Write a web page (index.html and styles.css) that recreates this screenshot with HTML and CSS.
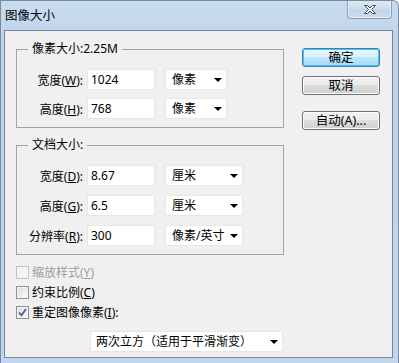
FILE: index.html
```html
<!DOCTYPE html>
<html>
<head>
  <title>图像大小</title>
  <link rel="stylesheet" href="styles.css">
</head>
<body>
  <div class="window">
    <div class="titlebar">
      <span class="title">图像大小</span>
      <div class="close-btn">
        <svg width="14" height="11" viewBox="0 0 14 11">
          <path d="M1.5 1.5h3l2.5 2.5 2.5-2.5h3l-4 4 4 4h-3l-2.5-2.5-2.5 2.5h-3l4-4z" fill="#fff" stroke="#3d4b5c" stroke-width="1" stroke-linejoin="round"/>
        </svg>
      </div>
    </div>

    <div class="frame">
      <div class="client">
        <div class="main">
          <fieldset class="group">
            <legend>像素大小:2.25M</legend>
            <div class="row">
              <label>宽度(<u>W</u>):</label>
              <div class="field">1024</div>
              <div class="select select-sm">像素<span class="arrow"></span></div>
            </div>
            <div class="row">
              <label>高度(<u>H</u>):</label>
              <div class="field">768</div>
              <div class="select select-sm">像素<span class="arrow"></span></div>
            </div>
          </fieldset>

          <fieldset class="group group-doc">
            <legend>文档大小:</legend>
            <div class="row">
              <label>宽度(<u>D</u>):</label>
              <div class="field">8.67</div>
              <div class="select select-md">厘米<span class="arrow"></span></div>
            </div>
            <div class="row">
              <label>高度(<u>G</u>):</label>
              <div class="field">6.5</div>
              <div class="select select-md">厘米<span class="arrow"></span></div>
            </div>
            <div class="row">
              <label>分辨率(<u>R</u>):</label>
              <div class="field">300</div>
              <div class="select select-md">像素/英寸<span class="arrow"></span></div>
            </div>
          </fieldset>

          <div class="checks">
            <div class="check-row disabled">
              <span class="checkbox"></span>
              <span>缩放样式(<u>Y</u>)</span>
            </div>
            <div class="check-row">
              <span class="checkbox"></span>
              <span>约束比例(<u>C</u>)</span>
            </div>
            <div class="check-row">
              <span class="checkbox">
                <svg width="9" height="9" viewBox="0 0 9 9">
                  <path d="M1 4.5l2.5 2.8L8 1" fill="none" stroke="#4a5f97" stroke-width="1.8"/>
                </svg>
              </span>
              <span>重定图像像素(<u>I</u>):</span>
            </div>
          </div>

          <div class="select select-lg">两次立方（适用于平滑渐变）<span class="arrow"></span></div>
        </div>

        <div class="buttons">
          <button class="btn btn-default">确定</button>
          <button class="btn">取消</button>
          <button class="btn btn-auto">自动(A)...</button>
        </div>
      </div>
    </div>
  </div>
</body>
</html>
```

FILE: styles.css
```css
body {
  margin: 0;
  font-family: "Noto Sans", "Noto Sans CJK SC", sans-serif;
  font-size: 12px;
  color: #000;
  background-color: #fff;
}
.window {
  width: 399px;
  height: 363px;
  box-sizing: border-box;
  border: 1px solid #7b8b9d;
  border-bottom: none;
  border-top-right-radius: 6px;
  background: linear-gradient(#c9dcf0, #bed4eb 40px, #c2d7ed);
  display: flex;
  flex-direction: column;
  overflow: hidden;
}
.titlebar {
  height: 29px;
  display: flex;
  justify-content: space-between;
  align-items: flex-start;
}
.title {
  margin: 7px 0 0 4px;
  font-size: 12.5px;
  line-height: 16px;
}
.close-btn {
  width: 45px;
  height: 19px;
  margin-right: 6px;
  margin-top: -1px;
  box-sizing: border-box;
  border: 1px solid #8b9db3;
  border-top: none;
  border-radius: 0 0 4px 4px;
  background: linear-gradient(#dfe9f5, #cddced 50%, #c1d4ea 51%, #cadcef);
  box-shadow: inset 0 0 0 1px rgba(255,255,255,0.5);
  display: flex;
  justify-content: center;
  align-items: center;
}
.frame {
  flex: 1;
  padding: 0 5px 5px 3px;
  display: flex;
}
.client {
  flex: 1;
  border: 1px solid #74859a;
  background-color: #f0f0f0;
  display: flex;
  padding: 11px 12px 0 11px;
}
.main {
  width: 268px;
}
.group {
  margin: 0;
  padding: 13px 8px 8px 8px;
  border: 1px solid #a3a3a3;
  min-width: 0;
}
.group legend {
  margin-left: 3px;
  padding: 0 4px;
  line-height: 14px;
}
.group-doc {
  margin-top: 10px;
}
.row {
  display: flex;
  align-items: center;
  height: 21px;
  margin-bottom: 8px;
}
.row:last-child {
  margin-bottom: 0;
}
.group-doc .row {
  margin-bottom: 9px;
}
.group-doc .row:last-child {
  margin-bottom: 0;
}
.row label {
  width: 58px;
  margin-right: 4px;
  text-align: right;
  white-space: nowrap;
}
.field {
  width: 68px;
  height: 21px;
  box-sizing: border-box;
  background: #fff;
  border: 1px solid #e6e6e6;
  padding-left: 3px;
  line-height: 19px;
}
.select {
  position: relative;
  height: 21px;
  box-sizing: border-box;
  background: #fff;
  border: 1px solid #e6e6e6;
  padding-left: 6px;
  line-height: 19px;
  white-space: nowrap;
}
.select-sm {
  width: 62px;
  margin-left: 10px;
}
.select-md {
  width: 78px;
  margin-left: 10px;
}
.select-lg {
  width: 193px;
  margin-left: 74px;
  margin-top: 9px;
  padding-left: 5px;
}
.arrow {
  position: absolute;
  right: 4px;
  top: 8px;
  width: 0;
  height: 0;
  border-left: 4px solid transparent;
  border-right: 4px solid transparent;
  border-top: 4px solid #000;
}
.checks {
  margin-top: 7px;
}
.check-row {
  display: flex;
  align-items: center;
  height: 20px;
}
.check-row.disabled {
  color: #9d9d9d;
}
.checkbox {
  width: 13px;
  height: 13px;
  box-sizing: border-box;
  margin-right: 3px;
  border: 1px solid #8e8f8f;
  background: linear-gradient(135deg, #dcdcdc, #fbfbfb);
  box-shadow: inset 0 0 0 1px #f4f4f4;
  display: flex;
  justify-content: center;
  align-items: center;
}
.disabled .checkbox {
  border-color: #c2c2c2;
  background: #f4f4f4;
}
.buttons {
  margin-left: 18px;
  padding-top: 6px;
  display: flex;
  flex-direction: column;
}
.btn {
  width: 78px;
  height: 19px;
  padding: 0;
  margin-bottom: 9px;
  font-family: "Noto Sans", "Noto Sans CJK SC", sans-serif;
  font-size: 12.5px;
  line-height: 16px;
  color: #000;
  border: 1px solid #707070;
  border-radius: 3px;
  background: linear-gradient(#f2f2f2, #ebebeb 45%, #dddddd 50%, #cfcfcf);
  box-shadow: inset 0 0 0 1px #fcfcfc;
}
.btn-default {
  border-color: #3c7fb1;
  background: linear-gradient(#eaf6fd, #d9f0fc 45%, #bee6fd 50%, #a7d9f5);
  box-shadow: inset 0 0 0 1px #48c4f2;
}
.btn-auto {
  margin-top: 7px;
}
u {
  text-decoration: underline;
  text-underline-offset: 1px;
}
```
